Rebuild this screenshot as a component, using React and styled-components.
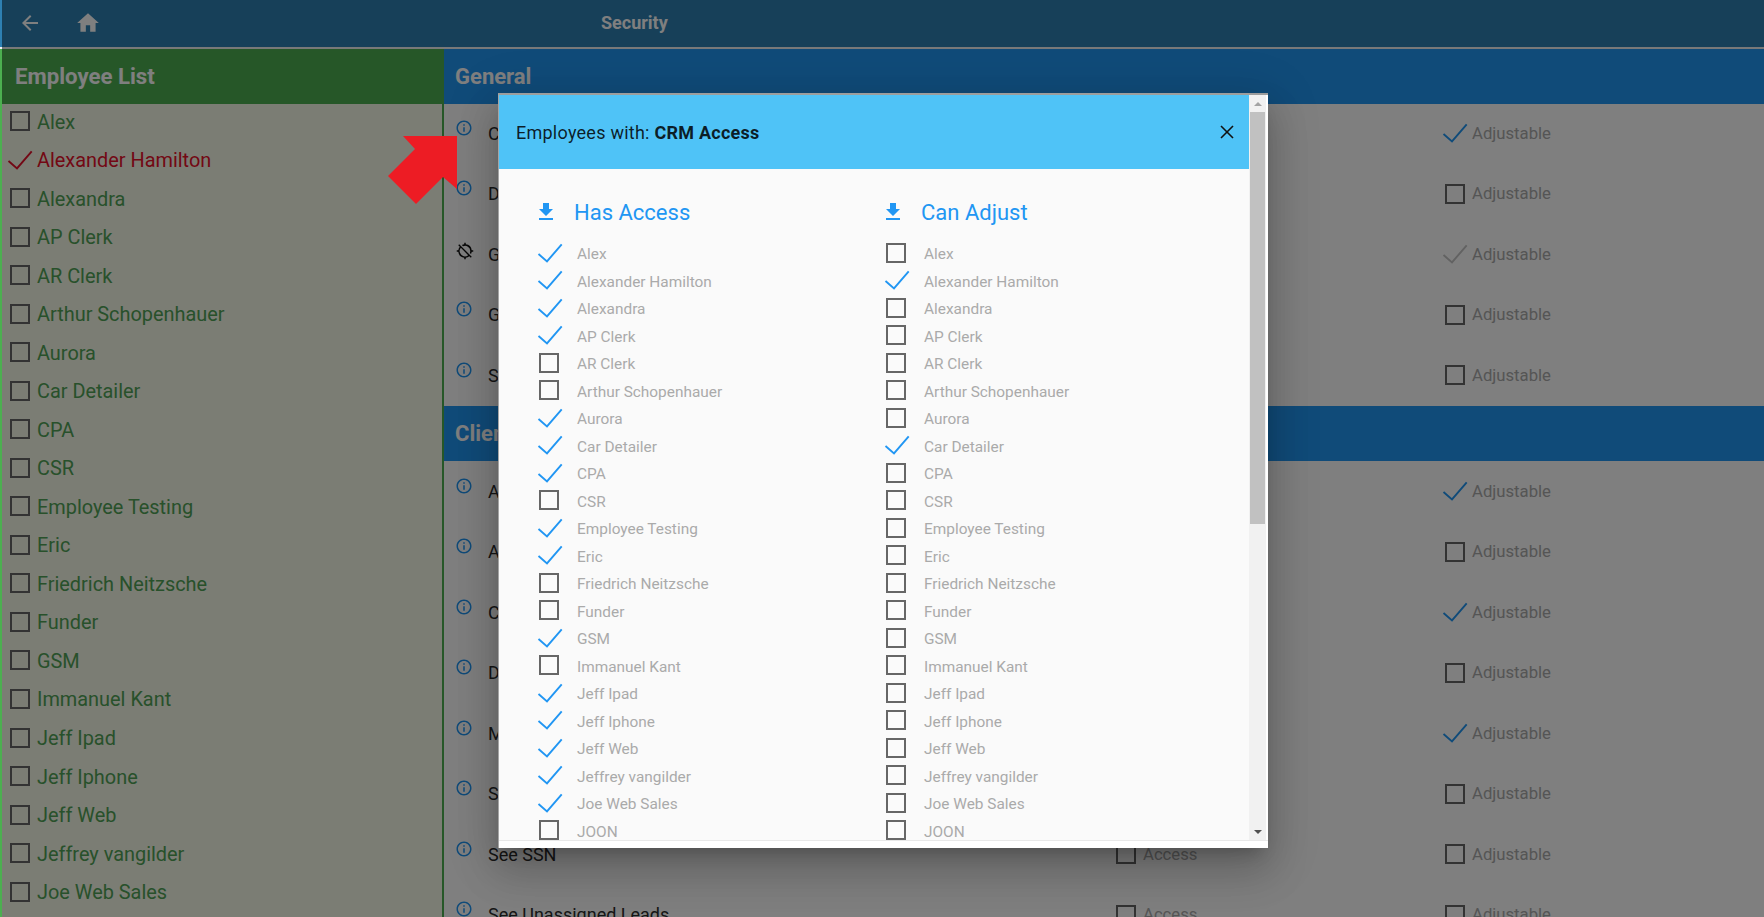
import React from "react";
import styled, { createGlobalStyle } from "styled-components";
import { MdArrowBack, MdHome, MdInfoOutline, MdGpsOff, MdFileDownload } from "react-icons/md";

const Global = createGlobalStyle`
  html, body { margin: 0; padding: 0; height: 100%; overflow: hidden; background: #fff; }
  body { font-family: Roboto, "Liberation Sans", sans-serif; }
`;

const Page = styled.div`
  position: relative;
  width: 100%;
  height: 100vh;
  overflow: hidden;
  display: flex;
  flex-direction: column;
`;
const TopBar = styled.header`
  flex: none;
  box-sizing: border-box;
  height: 49px;
  background: #2e80b2;
  border-bottom: 2px solid #f2f2f2;
  display: flex;
  align-items: center;
  padding: 0 0 2px 18px;
  color: #fff;
`;
const TopIcon = styled.span`
  display: flex;
  width: ${(p) => p.$w}px;
  font-size: ${(p) => p.$size}px;
`;
const TopTitle = styled.div`
  margin-left: 500px;
  font-size: 18px;
  font-weight: 700;
`;
const Main = styled.div`
  flex: 1;
  display: flex;
  min-height: 0;
`;
const LeftPanel = styled.aside`
  flex: none;
  width: 440px;
  border-left: 2px solid #4caf50;
  border-right: 2px solid #4caf50;
  background: #f6fae8;
  overflow: hidden;
`;
const GreenHead = styled.h2`
  margin: 0;
  height: 55px;
  padding-left: 13px;
  background: #4caf50;
  color: #fff;
  font-size: 22.2px;
  font-weight: 700;
  line-height: 55px;
`;
const IconSlot = styled.span`
  flex: none;
  width: 24px;
  display: flex;
  align-items: center;
  justify-content: center;
`;
const EmployeeList = styled.div`
  margin-top: -1px;
  padding-left: 6px;
`;
const EmployeeRow = styled.div`
  height: 38.53px;
  display: flex;
  align-items: center;
  gap: 5px;
  font-size: 19.9px;
  color: ${(p) => (p.$on ? "#e6102a" : "#50a256")};
  ${IconSlot} { margin-top: -2px; }
`;
const Box = styled.span`
  display: block;
  box-sizing: border-box;
  width: 20px;
  height: 20px;
  border: 2px solid ${(p) => p.$c || "#666"};
`;
const CheckSvg = styled.svg`
  display: block;
  flex: none;
  width: 24px;
  height: 18px;
  overflow: visible;
  fill: none;
  stroke: ${(p) => p.$c};
  stroke-width: 1.9;
`;
const Check = ({ c }) => (
  <CheckSvg $c={c} viewBox="0 0 24 18">
    <polyline points="0.5,10 9,17.4 23.7,0.3" />
  </CheckSvg>
);
const RightPanel = styled.main`
  flex: 1;
  background: #fff;
  overflow: hidden;
`;
const BlueHead = styled.h2`
  margin: 0;
  height: 55px;
  padding-left: 11px;
  background: #2196f3;
  color: #fff;
  font-size: 22px;
  font-weight: 700;
  line-height: 55px;
`;
const GeneralRows = styled.div`
  margin: -1px 0 0.5px;
`;
const PermRow = styled.div`
  height: 60.5px;
  display: grid;
  grid-template-columns: 44px 626px 329px 1fr;
  align-items: center;
  font-size: 18px;
`;
const RowIcon = styled.span`
  display: flex;
  padding-left: ${(p) => (p.$gps ? 12 : 11)}px;
  margin-bottom: ${(p) => (p.$gps ? 7 : 11)}px;
  font-size: 18px;
  color: ${(p) => (p.$gps ? "#111" : "#2196f3")};
`;
const PermLabel = styled.span`
  color: #2c2c2c;
`;
const Opt = styled.span`
  display: flex;
  align-items: center;
  gap: 5px;
  font-size: 16.7px;
  color: #aaa;
`;
const Overlay = styled.div`
  position: absolute;
  inset: 0 0 0 2px;
  background: rgba(0, 0, 0, 0.5);
`;
const ArrowMark = styled.svg`
  position: absolute;
  left: 385px;
  top: 130px;
  width: 80px;
  height: 80px;
  z-index: 3;
`;
const Modal = styled.section`
  position: absolute;
  left: 498px;
  top: 93px;
  box-sizing: border-box;
  width: 770px;
  height: 755px;
  display: flex;
  flex-direction: column;
  background: #fff;
  border-top: 2px solid #9d9d9d;
  border-left: 1px solid #a5a5a5;
  box-shadow: 0 11px 15px -7px rgba(0, 0, 0, 0.2), 0 24px 38px 3px rgba(0, 0, 0, 0.14),
    0 9px 46px 8px rgba(0, 0, 0, 0.12);
`;
const ModalScroller = styled.div`
  flex: 1;
  min-height: 0;
  display: flex;
  padding-right: 2px;
`;
const ModalContent = styled.div`
  flex: 1;
  min-width: 0;
  overflow: hidden;
  background: #fafafa;
`;
const ModalHeader = styled.div`
  height: 74px;
  display: flex;
  align-items: center;
  justify-content: space-between;
  padding: 0 15px 0 17px;
  background: #4fc3f7;
  font-size: 18px;
  letter-spacing: 0.25px;
  color: rgba(0, 0, 0, 0.85);
  strong { font-weight: 700; }
`;
const CloseSvg = styled.svg`
  display: block;
  width: 14px;
  height: 14px;
  stroke: #111;
  stroke-width: 1.6;
`;
const Columns = styled.div`
  display: grid;
  grid-template-columns: 347px 1fr;
  padding: 30px 0 0 38px;
`;
const ColHead = styled.h3`
  margin: 0 0 15.5px;
  height: 26px;
  display: flex;
  align-items: center;
  gap: 16px;
  font-size: 22px;
  font-weight: 400;
  color: #2196f3;
  svg { margin-left: -3px; font-size: 24px; }
`;
const ModalRow = styled.div`
  height: 27.5px;
  display: flex;
  align-items: center;
  gap: 16px;
  font-size: 15.4px;
  color: #aaa;
  ${IconSlot} { margin-top: -3px; }
  ${CheckSvg} { margin: 0 -1px 0 1px; }
`;
const ScrollTrack = styled.div`
  flex: none;
  width: 17px;
  display: flex;
  flex-direction: column;
  align-items: center;
  background: #f1f1f1;
`;
const ScrollArrow = styled.span`
  flex: none;
  height: 17px;
  width: 100%;
  display: flex;
  align-items: center;
  justify-content: center;
  &::before {
    content: "";
    border-left: 4px solid transparent;
    border-right: 4px solid transparent;
    ${(p) => (p.$down ? "border-top: 4px solid #505050;" : "border-bottom: 4px solid #a3a3a3;")}
  }
`;
const ScrollThumb = styled.span`
  flex: none;
  width: 15px;
  height: 412px;
  background: #c1c1c1;
`;
const ScrollRest = styled.span`
  flex: 1;
`;
const ModalFooter = styled.div`
  flex: none;
  height: 7px;
  border-top: 1px solid #e8e8e8;
  background: #fff;
`;

const employees = ["Alex","Alexander Hamilton","Alexandra","AP Clerk","AR Clerk","Arthur Schopenhauer","Aurora","Car Detailer","CPA","CSR","Employee Testing","Eric","Friedrich Neitzsche","Funder","GSM","Immanuel Kant","Jeff Ipad","Jeff Iphone","Jeff Web","Jeffrey vangilder","Joe Web Sales","JOON"];
const hasAccess = new Set(["Alex","Alexander Hamilton","Alexandra","AP Clerk","Aurora","Car Detailer","CPA","Employee Testing","Eric","GSM","Jeff Ipad","Jeff Iphone","Jeff Web","Jeffrey vangilder","Joe Web Sales"]);
const canAdjust = new Set(["Alexander Hamilton","Car Detailer"]);

const BLUE = "#2196f3";
const general = [
  ["CRM Access", "blue"], ["Dashboard", "box"], ["GPS Tracking", "gray", true], ["Goals", "box"], ["Scheduling", "box"],
];
const client = [
  ["Add Clients", "blue"], ["Archive Clients", "box"], ["Client Notes", "blue"], ["Delete Clients", "box"],
  ["Merge Clients", "blue"], ["See Phone", "box"], ["See SSN", "box"], ["See Unassigned Leads", "box"],
];

const Mark = ({ kind, color }) => (
  <IconSlot>{kind ? <Check c={color} /> : <Box />}</IconSlot>
);

const Perm = ({ label, adj, gps }) => (
  <PermRow>
    <RowIcon $gps={gps}>{gps ? <MdGpsOff /> : <MdInfoOutline />}</RowIcon>
    <PermLabel>{label}</PermLabel>
    <Opt><IconSlot><Box $c="#666" /></IconSlot>Access</Opt>
    <Opt>
      <Mark kind={adj !== "box"} color={adj === "gray" ? "#c4c4c4" : BLUE} />
      Adjustable
    </Opt>
  </PermRow>
);

export default function App() {
  return (
    <Page>
      <Global />
      <TopBar>
        <TopIcon $w={57} $size={24}><MdArrowBack /></TopIcon>
        <TopIcon $w={26} $size={26}><MdHome /></TopIcon>
        <TopTitle>Security</TopTitle>
      </TopBar>
      <Main>
        <LeftPanel>
          <GreenHead>Employee List</GreenHead>
          <EmployeeList>
            {employees.slice(0, 21).map((n) => (
              <EmployeeRow key={n} $on={n === "Alexander Hamilton"}>
                <Mark kind={n === "Alexander Hamilton"} color="#e6102a" />
                {n}
              </EmployeeRow>
            ))}
          </EmployeeList>
        </LeftPanel>
        <RightPanel>
          <BlueHead>General</BlueHead>
          <GeneralRows>
            {general.map(([l, a, g]) => <Perm key={l} label={l} adj={a} gps={g} />)}
          </GeneralRows>
          <BlueHead>Client</BlueHead>
          {client.map(([l, a]) => <Perm key={l} label={l} adj={a} />)}
        </RightPanel>
      </Main>
      <Overlay />
      <ArrowMark viewBox="0 0 80 80">
        <polygon points="18,6 72,6 72,59 58,47 31,74 3,46 30,19" fill="#ed1c24" />
      </ArrowMark>
      <Modal>
        <ModalScroller>
          <ModalContent>
            <ModalHeader>
              <span>Employees with: <strong>CRM Access</strong></span>
              <CloseSvg viewBox="0 0 14 14">
                <line x1="1" y1="1" x2="13" y2="13" />
                <line x1="13" y1="1" x2="1" y2="13" />
              </CloseSvg>
            </ModalHeader>
            <Columns>
              <div>
                <ColHead><MdFileDownload />Has Access</ColHead>
                {employees.map((n) => (
                  <ModalRow key={n}><Mark kind={hasAccess.has(n)} color={BLUE} />{n}</ModalRow>
                ))}
              </div>
              <div>
                <ColHead><MdFileDownload />Can Adjust</ColHead>
                {employees.map((n) => (
                  <ModalRow key={n}><Mark kind={canAdjust.has(n)} color={BLUE} />{n}</ModalRow>
                ))}
              </div>
            </Columns>
          </ModalContent>
          <ScrollTrack>
            <ScrollArrow />
            <ScrollThumb />
            <ScrollRest />
            <ScrollArrow $down />
          </ScrollTrack>
        </ModalScroller>
        <ModalFooter />
      </Modal>
    </Page>
  );
}
